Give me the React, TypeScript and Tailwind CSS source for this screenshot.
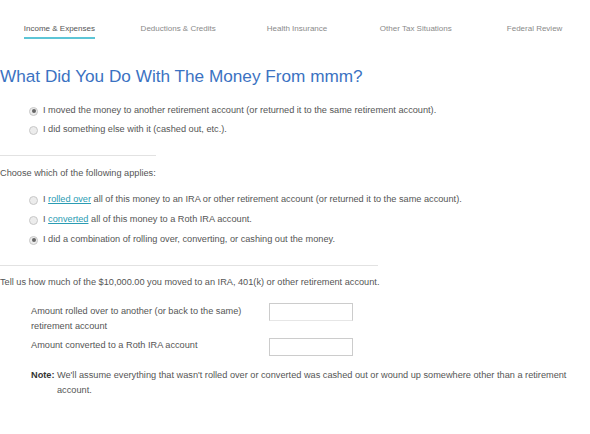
const tabs = [
  { label: "Income & Expenses", active: true },
  { label: "Deductions & Credits" },
  { label: "Health Insurance" },
  { label: "Other Tax Situations" },
  { label: "Federal Review" },
];

function Radio({ checked }: { checked?: boolean }) {
  return (
    <span className="mt-[1px] flex h-[9px] w-[9px] shrink-0 items-center justify-center rounded-full border border-[#c8c8c8] bg-[#ececec]">
      {checked && <span className="h-[4px] w-[4px] rounded-full bg-[#666]" />}
    </span>
  );
}

function Option({ checked, children }: { checked?: boolean; children: React.ReactNode }) {
  return (
    <div className="flex items-center gap-[5px] pl-[29px]">
      <Radio checked={checked} />
      <span>{children}</span>
    </div>
  );
}

function Link({ children }: { children: React.ReactNode }) {
  return <a className="text-[#2a9cb3] underline">{children}</a>;
}

export default function App() {
  return (
    <main
      className="h-[434px] w-[590px] overflow-hidden bg-white text-[9.2px] text-[#555]"
      style={{ fontFamily: '"Liberation Sans", Arial, sans-serif' }}
    >
      <nav className="grid w-[594px] grid-cols-5 pt-[24px] text-[8px] leading-[10px]">
        {tabs.map((t) => (
          <div key={t.label} className="flex justify-center">
            <div
              className={
                t.active
                  ? "border-b-2 border-[#5cc5d6] pb-[3px] text-[#555]"
                  : "pb-[3px] text-[#8a8a8a]"
              }
            >
              {t.label}
            </div>
          </div>
        ))}
      </nav>

      <h1 className="mt-[26px] text-[17.2px] leading-[22px] text-[#3b72c2]">
        What Did You Do With The Money From mmm?
      </h1>

      <section className="mt-[18px] flex flex-col gap-[8px] leading-[11px]">
        <Option checked>
          I moved the money to another retirement account (or returned it to the same retirement account).
        </Option>
        <Option>I did something else with it (cashed out, etc.).</Option>
      </section>

      <hr className="mt-[20px] w-[156px] border-[#e2e2e2]" />

      <p className="mt-[12px] leading-[11px]">Choose which of the following applies:</p>

      <section className="mt-[15px] flex flex-col gap-[9px] leading-[11px]">
        <Option>
          I <Link>rolled over</Link> all of this money to an IRA or other retirement account (or returned it to the same account).
        </Option>
        <Option>
          I <Link>converted</Link> all of this money to a Roth IRA account.
        </Option>
        <Option checked>I did a combination of rolling over, converting, or cashing out the money.</Option>
      </section>

      <hr className="mt-[20px] w-[378px] border-[#e2e2e2]" />

      <p className="mt-[11px] leading-[11px]">
        Tell us how much of the $10,000.00 you moved to an IRA, 401(k) or other retirement account.
      </p>

      <section className="mt-[15px] flex flex-col gap-[4px] pl-[31px] leading-[15px]">
        <div className="flex items-start">
          <label className="w-[238px] pt-[1px]">
            Amount rolled over to another (or back to the same) retirement account
          </label>
          <input className="h-[18px] w-[84px] border border-[#ccc] border-b-[#e6e6e6] bg-white" />
        </div>
        <div className="flex items-start">
          <label className="w-[238px]">Amount converted to a Roth IRA account</label>
          <input className="h-[18px] w-[84px] border border-[#ccc] bg-white" />
        </div>
      </section>

      <div className="mt-[12px] flex pl-[31px] pr-[20px] leading-[15px]">
        <b className="w-[26px] shrink-0 font-bold text-[#333]">Note:</b>
        <span>
          We'll assume everything that wasn't rolled over or converted was cashed out or wound up somewhere other than a retirement account.
        </span>
      </div>
    </main>
  );
}
